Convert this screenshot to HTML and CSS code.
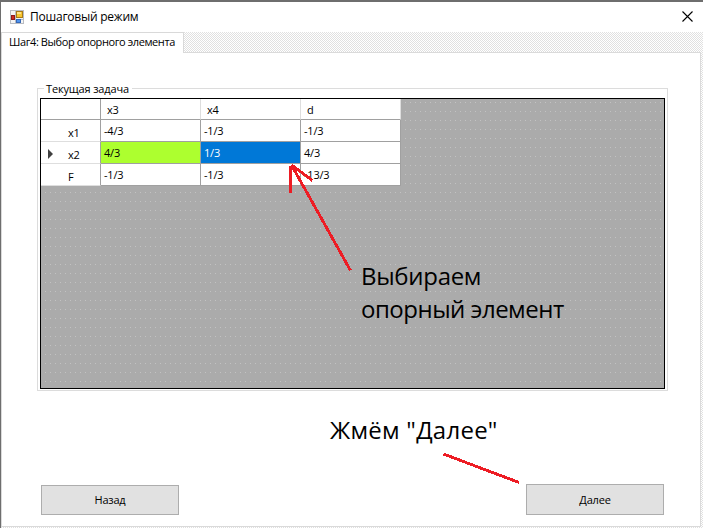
FILE: index.html
```html
<!DOCTYPE html>
<html lang="ru">
<head>
<meta charset="utf-8">
<title>Пошаговый режим</title>
<link rel="stylesheet" href="styles.css">
</head>
<body>
<div class="window">
  <header class="titlebar">
    <svg class="app-icon" width="14" height="14" viewBox="0 0 14 14" shape-rendering="crispEdges">
      <path fill="#f4f4f4" stroke="#b9bcc2" d="M.5.5h13v13H.5zM5.500 0v14M0 9.500h14"/>
      <path fill="#f7c52e" stroke="#a97a16" d="M6.500 1.500h6v6h-6z"/>
      <path fill="#ffe383" d="M7 2h4v2H7z"/>
      <path fill="#cf2b20" stroke="#8d1c1c" d="M1.500 5.500h3v4h-3z"/>
      <path fill="#4e93ee" stroke="#3567b7" d="M6.500 9.500h4v3h-4z"/>
    </svg>
    <span class="title">Пошаговый режим</span>
    <svg class="close" width="11" height="11" viewBox="0 0 11 11"><path d="M.5.5l10 10M10.500.5l-10 10" stroke="#000" stroke-width="1.100"/></svg>
  </header>
  <nav class="tabs"><div class="tab"><span>Шаг4: Выбор опорного элемента</span></div></nav>
  <main class="page">
    <section class="group">
      <h2 class="legend">Текущая задача</h2>
      <div class="grid-view">
        <table>
          <thead><tr><th></th><th>x3</th><th>x4</th><th>d</th></tr></thead>
          <tbody>
            <tr><th>x1</th><td>-4/3</td><td>-1/3</td><td>-1/3</td></tr>
            <tr><th class="current">x2</th><td class="candidate">4/3</td><td class="selected">1/3</td><td>4/3</td></tr>
            <tr><th>F</th><td>-1/3</td><td>-1/3</td><td>-13/3</td></tr>
          </tbody>
        </table>
      </div>
    </section>
    <footer class="actions">
      <button class="back">Назад</button>
      <button class="next">Далее</button>
    </footer>
  </main>
  <svg class="arrows" width="703" height="528" viewBox="0 0 703 528" fill="none" stroke="#ed1c24" stroke-width="2.900" stroke-linecap="butt" shape-rendering="crispEdges">
    <path d="M350.500 270.500L291.500 165M290.500 193V166M291.500 165L312.500 180.500M443.500 454L519 482.500"/>
  </svg>
  <div class="note note-pick"><span class="pick-a">Выбираем</span><br><span class="pick-b">опорный элемент</span></div>
  <div class="note note-next">Жмём "Далее"</div>
</div>
</body>
</html>
```
FILE: styles.css
```css
* { box-sizing: border-box; }
body { margin: 0; background: #fff; color: #000; font: 11px/14px "Open Sans", "Noto Sans", sans-serif; }
.window {
  position: relative; width: 703px; height: 528px; overflow: hidden;
  display: flex; flex-direction: column;
  border-top: 2px solid #6e6e6e; border-left: 1px solid #6e6e6e;
  background: repeating-conic-gradient(#e0e0e0 0 25%, #fff 0 50%) 0 0 / 2px 2px;
}
.titlebar { height: 30px; flex: none; display: flex; align-items: center; padding: 0 10px 0 9px; background: #fff; font-size: 12px; }
.app-icon { margin-right: 6px; margin-top: -1px; }
.title { letter-spacing: -.23px; white-space: nowrap; }
.close { margin-left: auto; margin-top: -2px; }
.tabs { height: 20px; flex: none; display: flex; }
.tab { width: 183px; height: 21px; padding: 2px 0 0 7px; border: 1px solid #d9d9d9; border-bottom: 0; background: #fff; white-space: nowrap; letter-spacing: -.4px; position: relative; z-index: 1; }
.page { width: 700px; height: 475px; flex: none; display: flex; flex-direction: column; padding: 35px 0 0 35px; border: 1px solid #dadada; background: #fff; }
.group { width: 631px; height: 303px; flex: none; padding: 9px 3px 2px; border: 1px solid #dcdcdc; position: relative; }
.legend { position: absolute; left: 6px; top: -7px; margin: 0; padding: 0 3px 0 2px; background: #fff; font: inherit; white-space: nowrap; letter-spacing: -.15px; }
.grid-view {
  width: 625px; height: 291px; margin-left: -1px; border: 1px solid #000;
  background: radial-gradient(circle at 2.5px 2.5px, #c2c2c2 0 .7px, transparent .8px) 2px 1px / 5px 9px #ababab;
}
table { border-collapse: separate; border-spacing: 0; table-layout: fixed; width: 360px; letter-spacing: -.2px; }
th, td { width: 100px; height: 22px; padding: 1px 0 0 3px; background: #fff; text-align: left; font-weight: 400; border-right: 1px solid #a0a0a0; border-bottom: 1px solid #a0a0a0; line-height: 14px; }
thead th { height: 21px; padding: 2px 0 0 6px; border-right-color: #dedede; }
th:first-child { width: 60px; border-right-color: #a0a0a0; }
tbody th { padding: 4px 0 0 27px; border-bottom-color: #dedede; }
.current { position: relative; }
.current::before { content: ""; position: absolute; left: 7px; top: 7px; border-left: 5px solid #404040; border-top: 5px solid transparent; border-bottom: 5px solid transparent; }
.candidate { background: #adff2f; }
.selected { background: #0078d7; color: #fff; }
.actions { width: 623px; height: 31px; margin: 93px 0 0 4px; display: flex; justify-content: space-between; align-items: flex-end; }
button { width: 138px; height: 31px; padding: 0; border: 1px solid #adadad; background: #e1e1e1; color: #000; font: inherit; letter-spacing: -.2px; }
.back { height: 30px; }
.arrows { position: absolute; left: -1px; top: -2px; z-index: 2; }
.note { position: absolute; z-index: 3; font-size: 24px; line-height: 33px; white-space: nowrap; }
.note-pick { left: 360px; top: 257px; }
.pick-a { letter-spacing: -.3px; }
.pick-b { letter-spacing: -.5px; }
.note-next { left: 329px; top: 411px; letter-spacing: .25px; }
```
